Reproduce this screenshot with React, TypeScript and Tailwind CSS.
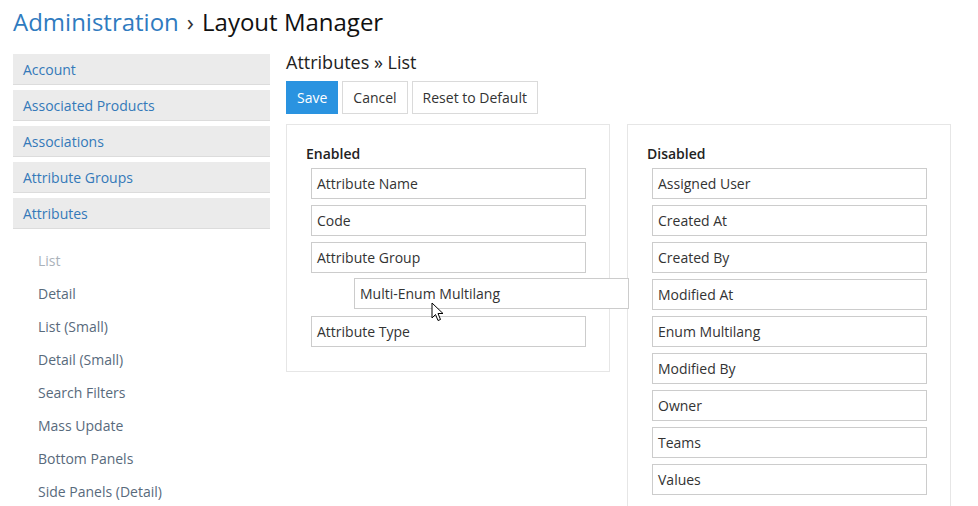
import React from "react";

const sideItems = ["Account", "Associated Products", "Associations", "Attribute Groups", "Attributes"];
const subItems = ["List", "Detail", "List (Small)", "Detail (Small)", "Search Filters", "Mass Update", "Bottom Panels", "Side Panels (Detail)"];
const disabledFields = ["Assigned User", "Created At", "Created By", "Modified At", "Enum Multilang", "Modified By", "Owner", "Teams", "Values"];

const Field = ({ label }: { label: string }) => (
  <div className="h-[31px] w-[275px] border border-[#cccccc] bg-white px-[5px] text-[14px] leading-[29px] text-[#333]">
    {label}
  </div>
);

const Cursor = () => (
  <svg width="14" height="21" viewBox="0 0 14 21" className="absolute left-[431px] top-[302px]">
    <path
      d="M1 1 L1 16 L4.5 12.5 L7 18.5 L9.5 17.5 L7 11.5 L12 11.5 Z"
      fill="white"
      stroke="black"
      strokeWidth="1"
      strokeLinejoin="miter"
    />
  </svg>
);

const App = () => {
  return (
    <div
      className="relative h-[506px] w-[978px] overflow-hidden bg-white pl-[13px]"
      style={{ fontFamily: "'Open Sans', 'Noto Sans', sans-serif" }}
    >
      {/* Header */}
      <div className="h-[44px] pt-[6px] text-[24px] leading-[32px]">
        <span className="text-[#2f7bbf]">Administration</span>
        <span className="px-[8px] text-[#333]">›</span>
        <span className="text-[#111]">Layout Manager</span>
      </div>

      <div className="mt-[6px] flex gap-[16px]">
        {/* Sidebar */}
        <div className="w-[257px] pt-[4px]">
          {sideItems.map((item) => (
            <div
              key={item}
              className="mb-[5px] h-[31px] border-b border-[#dcdcdc] bg-[#ebebeb] pl-[10px] text-[14px] leading-[32px] text-[#3479b9]"
            >
              {item}
            </div>
          ))}
          <div className="pt-[10px]">
            {subItems.map((item, i) => (
              <div
                key={item}
                className={
                  "h-[33px] pl-[25px] text-[14px] leading-[33px] " +
                  (i === 0 ? "text-[#aab2ba]" : "text-[#586a7c]")
                }
              >
                {item}
              </div>
            ))}
          </div>
        </div>

        {/* Main */}
        <div className="flex-1">
          <div className="h-[24px] text-[18px] leading-[24px] text-[#222]">Attributes » List</div>
          <div className="mt-[7px] flex gap-[4px]">
            <button className="h-[33px] border border-[#2a93e0] bg-[#2a93e0] px-[10px] text-[14px] text-white">Save</button>
            <button className="h-[33px] border border-[#dadada] bg-white px-[10px] text-[14px] text-[#333]">Cancel</button>
            <button className="h-[33px] border border-[#dadada] bg-white px-[10px] text-[14px] text-[#333]">
              Reset to Default
            </button>
          </div>

          <div className="mt-[10px] flex items-start gap-[17px]">
            <div className="w-[324px] border border-[#e6e6e6] px-[19px] pb-[24px] pt-[19px]">
              <div className="mb-[4px] h-[20px] text-[14px] font-semibold leading-[20px] text-[#222]">Enabled</div>
              <div className="flex flex-col gap-[6px] pl-[5px]">
                <Field label="Attribute Name" />
                <Field label="Code" />
                <Field label="Attribute Group" />
                <div className="h-[31px]" />
                <Field label="Attribute Type" />
              </div>
            </div>
            <div className="h-[400px] w-[324px] border border-[#e6e6e6] px-[19px] pt-[19px]">
              <div className="mb-[4px] h-[20px] text-[14px] font-semibold leading-[20px] text-[#222]">Disabled</div>
              <div className="flex flex-col gap-[6px] pl-[5px]">
                {disabledFields.map((f) => (
                  <Field key={f} label={f} />
                ))}
              </div>
            </div>
          </div>
        </div>
      </div>

      {/* Dragged item */}
      <div className="absolute left-[354px] top-[278px]">
        <Field label="Multi-Enum Multilang" />
      </div>
      <Cursor />
    </div>
  );
};

export default App;
